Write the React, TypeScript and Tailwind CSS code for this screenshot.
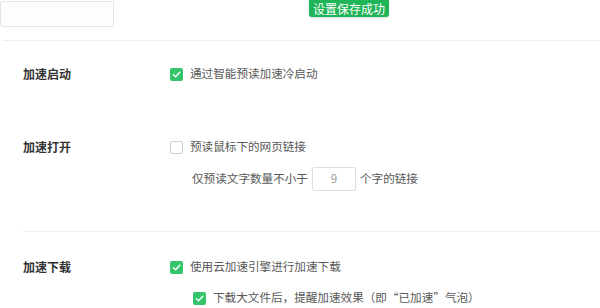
import React from 'react';

function Check({ checked }: { checked: boolean }) {
  if (!checked) {
    return <span className="inline-block w-[13px] h-[13px] rounded-[2px] border border-[#cfcfcf] bg-white shrink-0" />;
  }
  return (
    <span className="inline-flex w-[13px] h-[13px] rounded-[2px] bg-[#34c46b] items-center justify-center shrink-0">
      <svg width="9" height="9" viewBox="0 0 10 10" fill="none">
        <path d="M1.5 5.2 L4 7.5 L8.6 2.6" stroke="white" strokeWidth="1.6" strokeLinecap="round" strokeLinejoin="round" />
      </svg>
    </span>
  );
}

function Option({ checked, children }: { checked: boolean; children: React.ReactNode }) {
  return (
    <div className="flex items-center gap-[7px] h-[20px]">
      <Check checked={checked} />
      <span className="text-[11.6px] text-[#585858]">{children}</span>
    </div>
  );
}

export default function App() {
  return (
    <div
      className="w-[600px] h-[308px] bg-white overflow-hidden"
      style={{ fontFamily: '"Noto Sans CJK SC", "Noto Sans", sans-serif' }}
    >
      <div className="h-[40px] relative flex">
        <div className="w-[114px] h-[26px] mt-[1px] border border-[#e6e6e6] rounded-[2px] bg-[#fdfdfd]" />
        <div className="ml-[195px] h-[17px] w-[80px] bg-[#1fb457] rounded-b-[3px] text-white text-[12px] leading-[17px] text-center shadow-[0_1px_2px_rgba(0,0,0,0.15)]">
          设置保存成功
        </div>
      </div>
      <div className="border-t border-[#efefef] ml-[3px]" />

      <div className="flex pl-[23px] pt-[23px]">
        <div className="w-[147px] h-[20px] flex items-center text-[12px] font-bold text-[#333]">加速启动</div>
        <Option checked>通过智能预读加速冷启动</Option>
      </div>

      <div className="flex pl-[23px] pt-[53px]">
        <div className="w-[147px] h-[20px] flex items-center text-[12px] font-bold text-[#333]">加速打开</div>
        <div className="flex flex-col">
          <Option checked={false}>预读鼠标下的网页链接</Option>
          <div className="flex items-center mt-[10px] ml-[22px] text-[11.6px] text-[#585858]">
            <span>仅预读文字数量不小于</span>
            <span className="ml-[4px] w-[44px] h-[24px] border border-[#dedede] rounded-[2px] flex items-center justify-center text-[#999]">9</span>
            <span className="ml-[4px]">个字的链接</span>
          </div>
        </div>
      </div>

      <div className="border-t border-[#efefef] ml-[23px] mt-[40px]" />

      <div className="flex pl-[23px] pt-[25px]">
        <div className="w-[147px] h-[20px] flex items-center text-[12px] font-bold text-[#333]">加速下载</div>
        <div className="flex flex-col">
          <Option checked>使用云加速引擎进行加速下载</Option>
          <div className="ml-[23px] mt-[11px]">
            <Option checked>下载大文件后，提醒加速效果（即“已加速”气泡）</Option>
          </div>
        </div>
      </div>
    </div>
  );
}
